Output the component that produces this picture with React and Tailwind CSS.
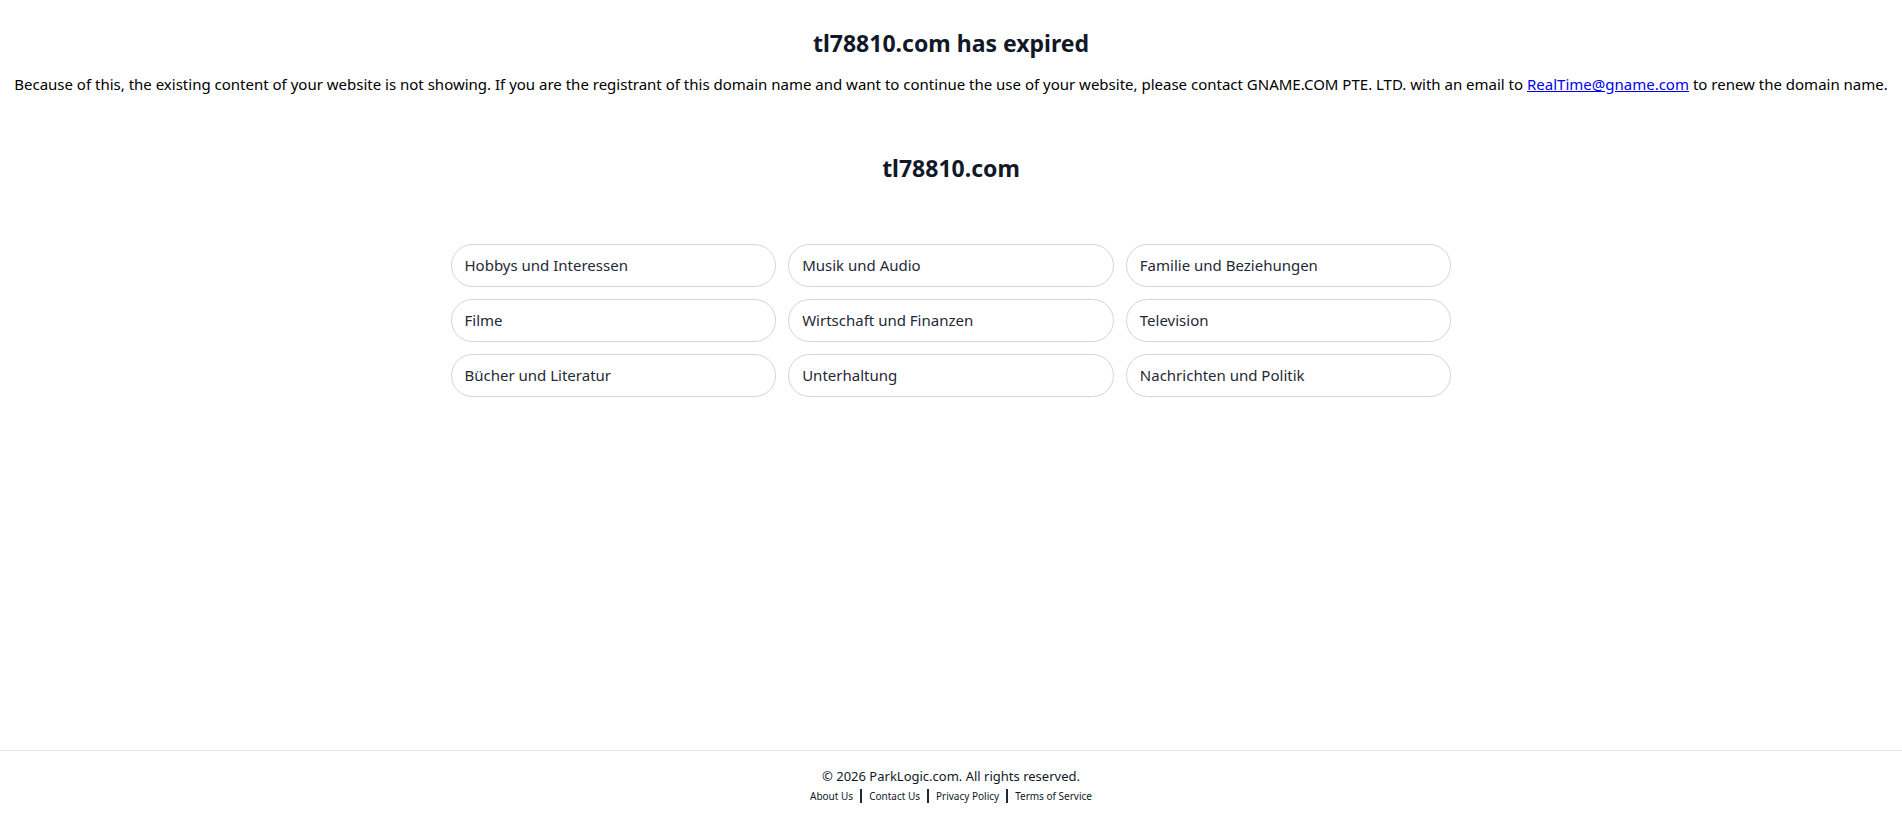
import React from 'react';

const CATEGORIES = [
  'Hobbys und Interessen',
  'Musik und Audio',
  'Familie und Beziehungen',
  'Filme',
  'Wirtschaft und Finanzen',
  'Television',
  'Bücher und Literatur',
  'Unterhaltung',
  'Nachrichten und Politik',
];

const FOOTER_LINKS = ['About Us', 'Contact Us', 'Privacy Policy', 'Terms of Service'];

const App = () => {
  return (
    <div className="min-h-screen flex flex-col bg-white text-black font-['Noto_Sans',sans-serif]">
      <main className="flex-1">
        <section className="pt-[26px] text-center">
          <h1 className="text-[23px] leading-[34px] font-bold text-[#111827]">
            tl78810.com has expired
          </h1>
          <p className="mt-[14px] text-[15px] leading-[20px]">
            Because of this, the existing content of your website is not showing. If you are the
            registrant of this domain name and want to continue the use of your website, please
            contact GNAME.COM PTE. LTD. with an email to{' '}
            <a href="#" className="text-[#0000ee] underline">
              RealTime@gname.com
            </a>{' '}
            to renew the domain name.
          </p>
        </section>

        <section className="mt-[59px] text-center">
          <h2 className="text-[23px] leading-[30px] font-bold text-[#111827]">tl78810.com</h2>
        </section>

        <section className="mx-auto mt-[61px] w-[1001px] grid grid-cols-3 gap-x-[12px] gap-y-[12px]">
          {CATEGORIES.map((label) => (
            <a
              key={label}
              href="#"
              className="h-[43px] flex items-center rounded-full border border-[#d4d4d8] px-[13px] text-[15px] text-[#1f2937]"
            >
              {label}
            </a>
          ))}
        </section>
      </main>

      <footer className="h-[68px] border-t border-[#e5e7eb] pt-[16px] text-center">
        <p className="text-[13px] leading-[18px] text-[#111827]">© 2026 ParkLogic.com. All rights reserved.</p>
        <div className="mt-[4px] flex justify-center items-center text-[10px] leading-[14px] text-[#111827]">
          {FOOTER_LINKS.map((link, index) => (
            <a
              key={link}
              href="#"
              className={
                index < FOOTER_LINKS.length - 1
                  ? 'px-[7px] border-r-2 border-[#1e293b]'
                  : 'px-[7px]'
              }
            >
              {link}
            </a>
          ))}
        </div>
      </footer>
    </div>
  );
};

export default App;
